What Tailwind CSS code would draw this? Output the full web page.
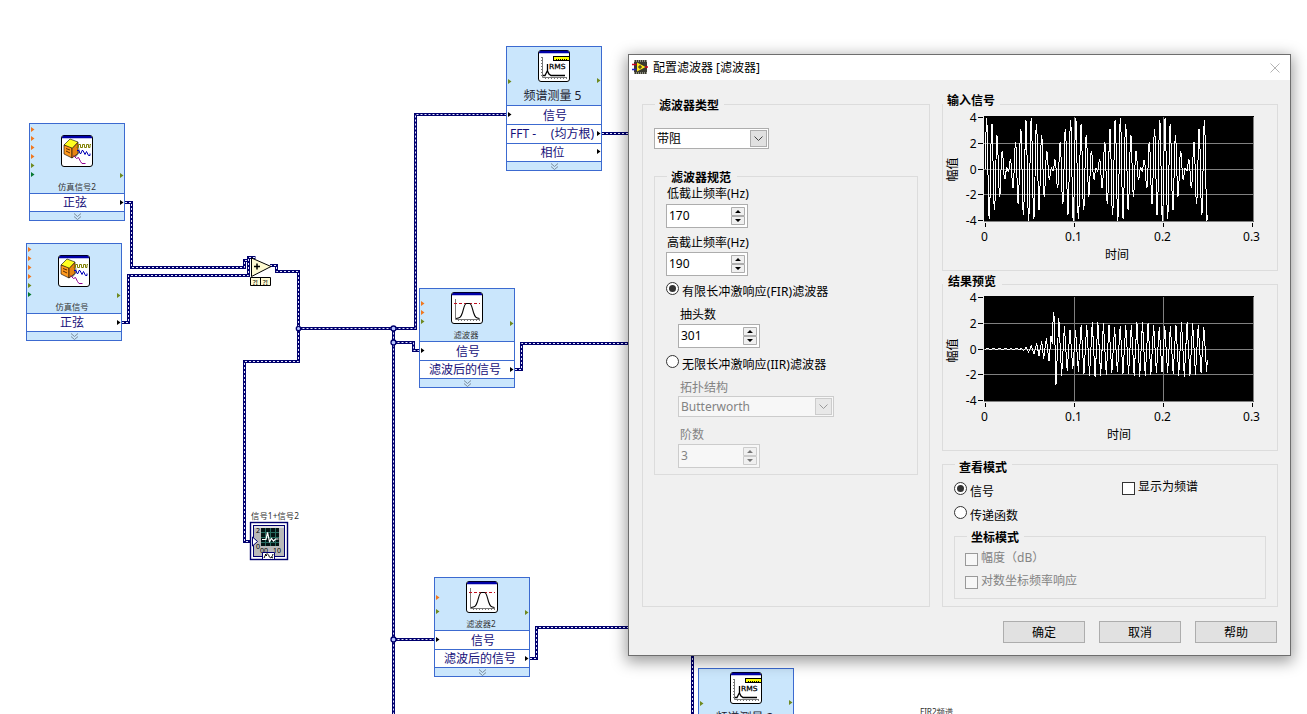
<!DOCTYPE html>
<html lang="zh-CN">
<head>
<meta charset="utf-8">
<title>配置滤波器</title>
<script src="https://cdn.jsdelivr.net/npm/@tailwindcss/browser@4"></script>
</head>
<body class="relative h-[714px] w-[1307px] overflow-hidden bg-white font-['Noto_Sans','Noto_Sans_CJK_SC',sans-serif] text-xs text-black">

<svg class="hidden">
  <defs>
    <symbol id="frame" viewBox="0 0 32 32">
      <rect x=".5" y=".5" width="31" height="31" rx="2.5" fill="#fff" stroke="#000"/>
      <path d="M2 1.5h28M1 2.5h30" stroke="#0000a8" stroke-width="1.4"/>
    </symbol>
    <symbol id="ic-sim" viewBox="0 0 32 32">
      <use href="#frame"/>
      <path d="M12 22l5-4 1-6 1 5-4 5z" fill="#888"/>
      <g stroke="#000" stroke-width=".6">
        <path d="M3 10l6-6 8 3-6 7z" fill="#ffff20"/>
        <path d="M3 10l8 3v10l-8-4z" fill="#ff9a20"/>
        <path d="M11 13.500l6-6v11l-6 4.500z" fill="#e88412"/>
      </g>
      <path d="M5 13.500l4 1.500M5 16l4 2" stroke="#5a2c00"/>
      <path d="M15.500 12.500h2v-3h2v3h2v-3h2v3h2v-3h2v3h1.500v-3h1" fill="none" stroke="#808000"/>
      <path d="M16 15.500h2l1 3h1l1-3h1l2 4 1.500-3 2 4h1.500v-2" fill="none" stroke="#0000b8"/>
      <path d="M12.500 20.500l3 3 2-1 2 4 1.500 2h3.500" fill="none" stroke="#900090"/>
    </symbol>
    <symbol id="ic-rms" viewBox="0 0 32 32">
      <use href="#frame"/>
      <path d="M4.500 7v20.500H29" fill="none" stroke="#777"/>
      <path d="M3.500 7v20M7 28.500h22" fill="none" stroke="#777" stroke-dasharray="1 2"/>
      <rect x="15.500" y="6.500" width="16" height="4" fill="#ff0" stroke="#000"/>
      <path d="M18 9.500h12" stroke="#000" stroke-dasharray="1 1"/>
      <path d="M5 25.500h2l1.500-3 1-2V14v7l1.500 3 2 1.500h14" fill="none" stroke="#000" stroke-width="1.300"/>
      <text x="11" y="19" font-size="7" font-family="DejaVu Sans" textLength="16.500" lengthAdjust="spacingAndGlyphs" stroke="#000" stroke-width=".25">RMS</text>
    </symbol>
    <symbol id="ic-filter" viewBox="0 0 32 32">
      <use href="#frame"/>
      <path d="M4.500 7v20.500H29" fill="none" stroke="#777"/>
      <path d="M7 28.500h22" stroke="#777" stroke-dasharray="1 2"/>
      <path d="M3 11.500h26" stroke="#c01020" stroke-dasharray="3 2"/>
      <path d="M5 26.500c4 0 5-1.500 6.500-6 1.500-5 2-9 4-9h3c2 0 2.500 4 4 9 1.500 4.500 2.500 6 6 6" fill="none" stroke="#000" stroke-width="1.100"/>
    </symbol>
    <symbol id="chev" viewBox="0 0 9 7"><path d="M1 .5l3.500 3L8 .5M1 3.500l3.500 3L8 3.500" fill="none" stroke="#7b8b9b"/></symbol>
    <symbol id="axes" viewBox="943 108 334 161">
      <path d="M984 116h270v106H984z" fill="#000"/>
      <path d="M984 143.500h269M984 169.500h269M984 194.500h269M1074.500 117v104M1163.500 117v104" stroke="#808080"/>
      <path d="M984 221.500h269.500V117" fill="none" stroke="#808080"/>
      <path d="M978 117.500h5M978 143.500h5M978 169.500h5M978 194.500h5M978 220.500h5M985.500 223v4M1074.500 223v4M1163.500 223v4M1252.500 223v4" stroke="#000"/>
      <g font-size="12" text-anchor="end"><text x="976.500" y="122">4</text><text x="976.500" y="148">2</text><text x="976.500" y="174">0</text><text x="976.500" y="199">-2</text><text x="976.500" y="225">-4</text></g>
      <g font-size="12" text-anchor="middle"><text x="984.500" y="241">0</text><text x="1073.500" y="241">0.1</text><text x="1162.500" y="241">0.2</text><text x="1251.500" y="241">0.3</text></g>
    </symbol>
  </defs>
</svg>

<!-- wires -->
<svg class="absolute inset-0" width="1307" height="714" fill="none">
  <defs>
    <path id="wires" d="M125 202.500h6.500v65h113v-7h4M122 322.500h6.500v-47h120v-18h7M270 265.500h6.500v6h22v90h-54v180h8M298.500 328.500h117v-214H507M393.500 328.500V714M393.500 342.500h20v8h6M515 369.500h6.500v-26H630M393.500 639.500H435M530 658.500h6.500v-31H630M602 133.500h28M692.500 650v64"/>
  </defs>
  <use href="#wires" stroke="#00006e" stroke-width="3"/>
  <use href="#wires" stroke="#e6e6ff" stroke-width="1" stroke-dasharray="2 2"/>
  <g fill="#b8c4ff" stroke="#00006e" stroke-width="1.300"><circle cx="298.500" cy="328.500" r="2.200"/><circle cx="393.500" cy="328.500" r="2.500"/><circle cx="393.500" cy="342.500" r="2.500"/><circle cx="393.500" cy="639.500" r="2.500"/></g>
  <path d="M251.500 258v18.500L271 266.500z" fill="#fffbd2" stroke="#000"/>
  <path d="M254 266.500h6M257 263.500v6" stroke="#000" stroke-width="1.500"/>
  <path d="M250.500 277.500h20v8h-20zM260.500 277.500v8" fill="#fffbd2" stroke="#000"/>
  <g fill="#000" font-size="7.500"><text x="252.500" y="284.500">?!</text><text x="262.500" y="284.500">?!</text></g>
  <!-- oscilloscope terminal -->
  <g>
    <rect x="250.500" y="522.500" width="37" height="37" fill="#fff" stroke="#00006e" stroke-width="1.400"/>
    <rect x="253.500" y="525.500" width="31" height="31" fill="#b9b9b9" stroke="#00006e"/>
    <path d="M254 526h30v2h-30z" fill="#e2e2e2"/>
    <rect x="261" y="528" width="18" height="18" fill="#041414"/>
    <path d="M261 532.500h18M261 537.500h18M261 542.500h18M265.500 528v18M270.500 528v18M275.500 528v18" stroke="#286b60"/>
    <path d="M262 539.500h4l1.500-7 2 9 2-3 2 2.500 2-2h3" stroke="#fff" stroke-width="1.200"/>
    <g fill="#000" font-size="7"><text x="256" y="533">2</text><text x="256" y="549">0</text><text x="260" y="552.500">00</text><text x="273" y="552.500">10</text></g>
    <path d="M252.500 537v9l5-4.500z" fill="#fff" stroke="#00006e"/>
    <path d="M262.500 559v-6.500h12v6.500" fill="#fff" stroke="#00006e"/>
    <path d="M264 558c2-5 4-5 5-2s3 2 4-2M265 554l2 2M271 557l2 1" stroke="#000"/>
  </g>
  <g fill="#303030" font-size="8.300"><text x="251" y="519" textLength="48">信号1+信号2</text><text x="920" y="715" textLength="33">FIR2频谱</text></g>
</svg>

<!-- express VI nodes -->
<div class="absolute left-[29px] top-[123px] flex h-[98px] w-24 flex-col border border-[#3c6ad0] bg-[#cae6fc] text-[#16107a]">
  <div class="flex h-[69px] flex-col items-center pt-[11px] text-[8.300px] text-[#333]"><svg class="size-8"><use href="#ic-sim"/></svg><span class="mt-[15px] leading-[10px]">仿真信号2</span></div>
  <div class="flex h-[19px] items-center justify-center border-y border-[#3c6ad0] bg-white pr-1 pt-px leading-none">正弦</div>
  <div class="flex flex-1 items-center justify-center"><svg class="h-[7px] w-[9px]"><use href="#chev"/></svg></div>
  <svg class="absolute -left-px -top-px" width="96" height="98"><path d="M2 4l3.500 2.500L2 9zM2 13l3.500 2.500L2 18zM2 22l3.500 2.500L2 27zM2 31l3.500 2.500L2 36z" fill="#f07820"/><path d="M2 40l3.500 2.500L2 45zM91 50l3.500 2.500L91 55z" fill="#6f8a20"/><path d="M2 49l3.500 2.500L2 54z" fill="#087830"/><path d="M91 77l3.500 2.500L91 82z"/></svg>
</div>
<div class="absolute left-[26px] top-[243px] flex h-[98px] w-24 flex-col border border-[#3c6ad0] bg-[#cae6fc] text-[#16107a]">
  <div class="flex h-[69px] flex-col items-center pt-[11px] text-[8.300px] text-[#333]"><svg class="size-8"><use href="#ic-sim"/></svg><span class="mt-[15px] pr-1 leading-[10px]">仿真信号</span></div>
  <div class="flex h-[19px] items-center justify-center border-y border-[#3c6ad0] bg-white pr-1 pt-px leading-none">正弦</div>
  <div class="flex flex-1 items-center justify-center"><svg class="h-[7px] w-[9px]"><use href="#chev"/></svg></div>
  <svg class="absolute -left-px -top-px" width="96" height="98"><path d="M2 4l3.500 2.500L2 9zM2 13l3.500 2.500L2 18zM2 22l3.500 2.500L2 27zM2 31l3.500 2.500L2 36z" fill="#f07820"/><path d="M2 40l3.500 2.500L2 45zM91 50l3.500 2.500L91 55z" fill="#6f8a20"/><path d="M2 49l3.500 2.500L2 54z" fill="#087830"/><path d="M91 77l3.500 2.500L91 82z"/></svg>
</div>
<div class="absolute left-[506px] top-[46px] flex h-[125px] w-24 flex-col border border-[#3c6ad0] bg-[#cae6fc] leading-none text-[#16107a]">
  <div class="flex h-[58px] flex-col items-center pt-[3px] text-[#1c1c30]"><svg class="size-8"><use href="#ic-rms"/></svg><span class="mt-2 -ml-[3px]">频谱测量 5</span></div>
  <div class="flex h-[19px] items-center justify-center border-t border-[#3c6ad0] bg-white pl-0.5 pt-px">信号</div>
  <div class="flex h-[19px] items-center justify-between whitespace-pre border-t border-[#3c6ad0] bg-white pl-[3px] pr-[7px]"><span>FFT -</span><span>(均方根)</span></div>
  <div class="flex h-[19px] items-center justify-center border-y border-[#3c6ad0] bg-white pr-[3px] pt-px">相位</div>
  <div class="flex flex-1 items-center justify-center"><svg class="h-[7px] w-[9px]"><use href="#chev"/></svg></div>
  <svg class="absolute -left-px -top-px" width="96" height="125"><path d="M2 33l3.500 2.500L2 38zM91 32l3.500 2.500L91 37z" fill="#6f8a20"/><path d="M2 66l3.500 2.500L2 71zM91 85l3.500 2.500L91 90zM91 103l3.500 2.500-3.500 2.500z"/></svg>
</div>
<div class="absolute left-[419px] top-[288px] flex h-[100px] w-24 flex-col border border-[#3c6ad0] bg-[#cae6fc] leading-none text-[#16107a]">
  <div class="flex h-[52px] flex-col items-center pt-[3px] text-[8.300px] text-[#333]"><svg class="size-8"><use href="#ic-filter"/></svg><span class="mt-[6px] pr-0.5 leading-[10px]">滤波器</span></div>
  <div class="flex h-[19px] items-center justify-center border-t border-[#3c6ad0] bg-white pl-0.5 pt-px">信号</div>
  <div class="flex h-[19px] items-center justify-center border-y border-[#3c6ad0] bg-white pr-1 pt-px">滤波后的信号</div>
  <div class="flex flex-1 items-center justify-center"><svg class="h-[7px] w-[9px]"><use href="#chev"/></svg></div>
  <svg class="absolute -left-px -top-px" width="96" height="100"><path d="M2 13l3.500 2.500L2 18zM2 22l3.500 2.500L2 27z" fill="#f07820"/><path d="M2 31l3.500 2.500L2 36zM91 33l3.500 2.500L91 38z" fill="#6f8a20"/><path d="M2 60l3.500 2.500L2 65zM91 79l3.500 2.500L91 84z"/></svg>
</div>
<div class="absolute left-[434px] top-[577px] flex h-[100px] w-24 flex-col border border-[#3c6ad0] bg-[#cae6fc] leading-none text-[#16107a]">
  <div class="flex h-[52px] flex-col items-center pt-[3px] text-[8.300px] text-[#333]"><svg class="size-8"><use href="#ic-filter"/></svg><span class="mt-[6px] pr-0.5 leading-[10px]">滤波器2</span></div>
  <div class="flex h-[19px] items-center justify-center border-t border-[#3c6ad0] bg-white pl-0.5 pt-px">信号</div>
  <div class="flex h-[19px] items-center justify-center border-y border-[#3c6ad0] bg-white pr-1 pt-px">滤波后的信号</div>
  <div class="flex flex-1 items-center justify-center"><svg class="h-[7px] w-[9px]"><use href="#chev"/></svg></div>
  <svg class="absolute -left-px -top-px" width="96" height="100"><path d="M2 18l3.500 2.500L2 23z" fill="#f07820"/><path d="M2 32l3.500 2.500L2 37zM91 33l3.500 2.500L91 38z" fill="#6f8a20"/><path d="M2 60l3.500 2.500L2 65zM91 79l3.500 2.500L91 84z"/></svg>
</div>
<div class="absolute left-[698px] top-[668px] flex h-[46px] w-24 flex-col overflow-hidden border border-b-0 border-[#3c6ad0] bg-[#cae6fc] leading-none">
  <div class="flex h-[58px] shrink-0 flex-col items-center pt-[3px] text-[#1c1c30]"><svg class="size-8 shrink-0"><use href="#ic-rms"/></svg><span class="mt-2 -ml-[3px]">频谱测量 2</span></div>
  <svg class="absolute -left-px -top-px" width="96" height="45"><path d="M2 33l3.500 2.500L2 38zM91 32l3.500 2.500L91 37z" fill="#6f8a20"/></svg>
</div>

<!-- dialog window -->
<div class="absolute left-[628px] top-[54px] flex h-[602px] w-[663px] flex-col border border-[#6e6e6e] bg-[#f0f0f0] shadow-[0_4px_14px_2px_rgba(0,0,0,0.38)]">
  <div class="flex h-[25px] shrink-0 items-center bg-white pl-[3px] pr-[10px]">
    <svg class="-mt-0.5" width="16" height="16" viewBox="0 0 16 16"><path d="M2 1h13v14H2z" fill="#3a3a30"/><path d="M2 2h13M2 14h13" stroke="#b0b0a0" stroke-width="1.500" stroke-dasharray="1 1"/><path d="M5 3.500v9L13.500 8z" fill="#ffe81a"/><path d="M6 8h4M8 6v4" stroke="#222"/><path d="M0 5.500h4.500M13 8h3" stroke="#d00020" stroke-width="1.500"/><path d="M0 10.500h4.500" stroke="#2020c0" stroke-width="1.500"/></svg>
    <span class="ml-[5px]">配置滤波器 [滤波器]</span>
    <svg class="ml-auto" width="10" height="10" viewBox="0 0 10 10"><path d="M.5 .5l9 9M9.500 .5l-9 9" stroke="#b4b4b4"/></svg>
  </div>
  <div class="flex flex-1 gap-3 pl-[13px] pr-3 pt-6">
    <!-- left column -->
    <div class="h-[503px] w-[288px] border border-[#dcdcdc]">
      <div class="-mt-[9px] ml-3 h-[18px] w-[69px] bg-[#f0f0f0] px-[4px] font-bold leading-[19px]">滤波器类型</div>
      <div class="ml-[11px] mt-[14px] flex h-[21px] w-[115px] items-center justify-between border border-[#adadad] bg-white pl-[2px] pr-px"><span class="pt-px">带阻</span>
        <span class="flex h-[17px] w-[17px] items-center justify-center border border-[#adadad] bg-[#e1e1e1]"><svg width="9" height="6"><path d="M.5 .5l4 4 4-4" fill="none" stroke="#444"/></svg></span></div>
      <div class="ml-[11px] mt-[27px] h-[299px] w-[264px] border border-[#dcdcdc] leading-[18px]">
        <div class="-mt-[9px] ml-3 h-[18px] w-[70px] bg-[#f0f0f0] pl-[4px] font-bold leading-[19px]">滤波器规范</div>
        <div class="-mt-px ml-3 h-4">低截止频率(Hz)</div>
        <div class="ml-[11px] mt-[3px] flex h-6 w-[82px] items-center justify-between border border-[#adadad] bg-white px-[2px]"><span>170</span>
          <svg width="14" height="18"><path d="M.5 .5h13v8H.5zM.5 9.500h13v8H.5z" fill="#f0f0f0" stroke="#adadad"/><path d="M4 6h6L7 3zM4 12h6l-3 3z"/></svg></div>
        <div class="ml-3 mt-[6px] h-4">高截止频率(Hz)</div>
        <div class="ml-[11px] mt-[2px] flex h-6 w-[82px] items-center justify-between border border-[#adadad] bg-white px-[2px]"><span>190</span>
          <svg width="14" height="18"><path d="M.5 .5h13v8H.5zM.5 9.500h13v8H.5z" fill="#f0f0f0" stroke="#adadad"/><path d="M4 6h6L7 3zM4 12h6l-3 3z"/></svg></div>
        <div class="ml-[11px] mt-[6px] flex h-5 gap-[3px]"><svg width="13" height="13"><circle cx="6.500" cy="6.500" r="6" fill="#fff" stroke="#333"/><circle cx="6.500" cy="6.500" r="3.500" fill="#333"/></svg><span class="mt-px tracking-[0.1px]">有限长冲激响应(FIR)滤波器</span></div>
        <div class="ml-[25px] mt-1 h-4">抽头数</div>
        <div class="ml-[23px] mt-[2px] flex h-6 w-[82px] items-center justify-between border border-[#adadad] bg-white px-[2px]"><span>301</span>
          <svg width="14" height="18"><path d="M.5 .5h13v8H.5zM.5 9.500h13v8H.5z" fill="#f0f0f0" stroke="#adadad"/><path d="M4 6h6L7 3zM4 12h6l-3 3z"/></svg></div>
        <div class="ml-[11px] mt-[7px] flex h-5 gap-[3px]"><svg width="13" height="13"><circle cx="6.500" cy="6.500" r="6" fill="#fff" stroke="#333"/></svg><span class="mt-px tracking-[0.1px]">无限长冲激响应(IIR)滤波器</span></div>
        <div class="text-[#838383]">
          <div class="ml-[25px] mt-1 h-4">拓扑结构</div>
          <div class="ml-[23px] mt-px flex h-[21px] w-[156px] items-center justify-between border border-[#cccccc] bg-[#f7f7f7] pl-[2px] pr-px"><span>Butterworth</span>
            <span class="flex h-[17px] w-[17px] items-center justify-center border border-[#cccccc] bg-[#e8e8e8]"><svg width="9" height="6"><path d="M.5 .5l4 4 4-4" fill="none" stroke="#999"/></svg></span></div>
          <div class="ml-[25px] mt-[9px] h-4">阶数</div>
          <div class="ml-[23px] mt-[2px] flex h-6 w-[82px] items-center justify-between border border-[#cccccc] bg-[#f7f7f7] px-[2px]"><span>3</span>
            <svg width="14" height="18"><path d="M.5 .5h13v8H.5zM.5 9.500h13v8H.5z" fill="#f0f0f0" stroke="#ccc"/><path d="M4 6h6L7 3zM4 12h6l-3 3z" fill="#777"/></svg></div>
        </div>
      </div>
    </div>
    <!-- right column -->
    <div class="w-[336px] leading-[18px]">
      <div class="h-[167px] border border-[#dcdcdc]">
        <div class="-mt-[13px] h-4 w-[57px] bg-[#f0f0f0] pl-1 font-bold">输入信号</div>
        <svg width="334" height="161" viewBox="943 108 334 161"><use href="#axes" x="943" y="108" width="334" height="161"/>
          <polyline id="sigIn" fill="none" stroke="#fff" shape-rendering="crispEdges"/>
          <g font-size="12" text-anchor="middle"><text x="1117" y="259">时间</text><text transform="translate(956.500 169.500) rotate(-90)">幅值</text></g></svg>
      </div>
      <div class="mt-[13px] h-[167px] border border-[#dcdcdc]">
        <div class="-mt-3 h-4 w-[59px] bg-[#f0f0f0] pl-[5px] font-bold">结果预览</div>
        <svg width="334" height="160" viewBox="943 109 334 160"><use href="#axes" x="943" y="108" width="334" height="161"/>
          <polyline id="sigOut" fill="none" stroke="#fff" shape-rendering="crispEdges"/>
          <g font-size="12" text-anchor="middle"><text x="1119" y="259">时间</text><text transform="translate(956.500 170.500) rotate(-90)">幅值</text></g></svg>
      </div>
      <div class="mt-[13px] h-[143px] border border-[#dcdcdc]">
        <div class="-mt-[6px] ml-3 h-4 w-[57px] bg-[#f0f0f0] pl-1 font-bold">查看模式</div>
        <div class="ml-[11px] mt-[7px] flex h-6">
          <svg width="13" height="13"><circle cx="6.500" cy="6.500" r="6" fill="#fff" stroke="#333"/><circle cx="6.500" cy="6.500" r="3.500" fill="#333"/></svg>
          <span class="ml-[3px] mt-px w-[152px]">信号</span>
          <span class="size-[13px] border border-[#333] bg-white"></span><span class="-mt-1 ml-[3px]">显示为频谱</span>
        </div>
        <div class="ml-[11px] flex h-[23px] gap-[3px]"><svg width="13" height="13"><circle cx="6.500" cy="6.500" r="6" fill="#fff" stroke="#333"/></svg><span class="mt-px">传递函数</span></div>
        <div class="ml-[11px] mt-[7px] h-[63px] w-[312px] border border-[#dcdcdc] text-[#838383]">
          <div class="-mt-2 ml-3 h-4 w-[57px] bg-[#f0f0f0] pl-1 font-bold text-black">坐标模式</div>
          <div class="ml-[10px] mt-2 flex h-[23px] gap-[3px]"><span class="size-[13px] border border-[#999] bg-[#f7f7f7]"></span><span class="-mt-1">幅度（dB）</span></div>
          <div class="ml-[10px] flex h-[23px] gap-[3px]"><span class="size-[13px] border border-[#999] bg-[#f7f7f7]"></span><span class="-mt-1">对数坐标频率响应</span></div>
        </div>
      </div>
      <div class="mt-[14px] flex justify-end gap-[14px] pr-px">
        <button class="h-[22px] w-[82px] border border-[#adadad] bg-[#e1e1e1] pt-px">确定</button>
        <button class="h-[22px] w-[82px] border border-[#adadad] bg-[#e1e1e1] pt-px">取消</button>
        <button class="h-[22px] w-[82px] border border-[#adadad] bg-[#e1e1e1] pt-px">帮助</button>
      </div>
    </div>
  </div>
</div>

<script>
const point = (x, v) => x.toFixed(2) + ',' + (169.5 - 13 * v).toFixed(2);
// two tones, 160 Hz and 180 Hz
let input = [];
for (let t = 0; t < 0.2492; t += 0.0005) {
  input.push(point(985.3 + 892 * t, 3.97 * Math.sin(2 * Math.PI * 170 * t) * Math.cos(20 * Math.PI * t)));
}
document.getElementById('sigIn').setAttribute('points', input.join(' '));
// band-stop output: [horizontal position in thirds of a pixel, value]
const start = [[135,0],[143,.08],[152,0],[160,.08],[170,0],[178,.08],[188,0],[196,.08],[205,0],[213,.05],[222,0],[230,.08],[238,0],[245,.08],[251,-.1],[258,.15],[266,-.2],[274,.3],[282,-.35],[290,.5],[297,-.5],[305,.65],[311,-.7],[319,.85],[327,-.9],[333,1],[337,.4],[340,2.9],[343,2.4],[348,-2.7]];
const peaks = [2.4,1.8,1.5,1.5,1.9,1.9,2.1,2.1,2,1.9,1.7,1.8,1.9,1.9,2.1,2.1,2,1.9,1.7,1.8,1.8,1.9,2.1,2.1,2,1.9,1.7];
const output = start.slice();
peaks.forEach((p, i) => {
  const x = 356.5 + 16.73 * i;
  output.push([x, p], [x + 8.4, -(i === 0 ? 2.05 : (p + (peaks[i + 1] || 1.8)) / 2)]);
});
output.push([802, -0.8]);
document.getElementById('sigOut').setAttribute('points', output.map(([x, v]) => point(940 + x / 3, v)).join(' '));
</script>
</body>
</html>
